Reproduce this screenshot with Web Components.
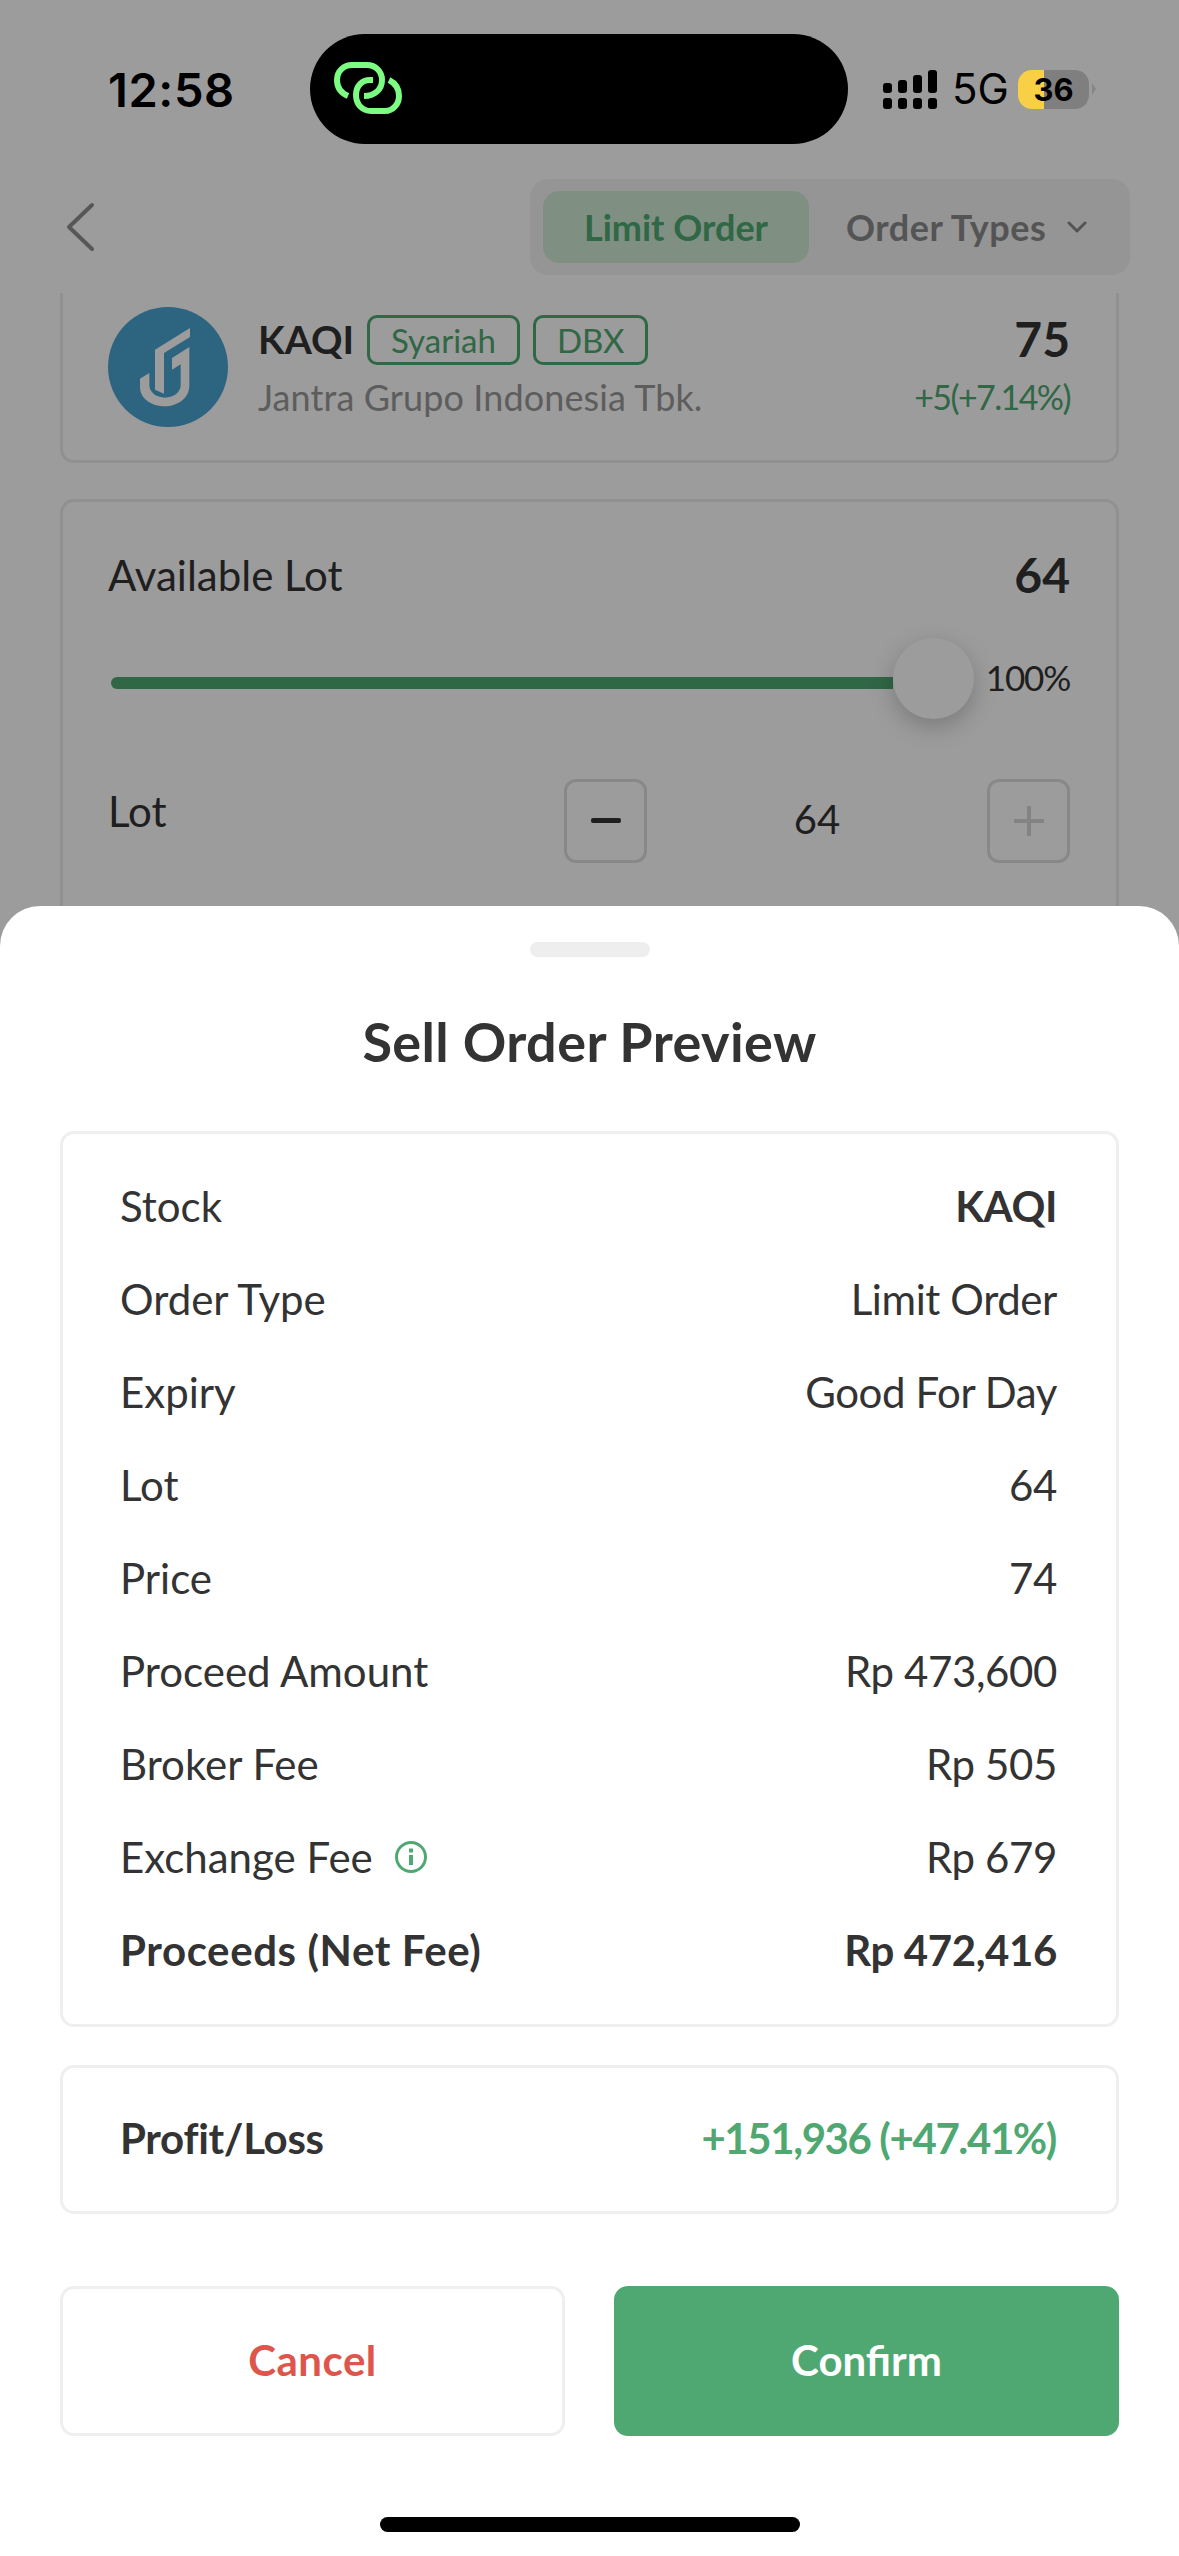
<!DOCTYPE html>
<html>
<head>
<meta charset="utf-8">
<title>Sell Order Preview</title>
<style>
    html, body {
        margin: 0;
        background: #fff;
    }
    body {
        font-family: Lato, "Noto Sans", sans-serif;
        color: #333;
    }
</style>
</head>
<body>
<app-shell>
    <status-bar time="12:58" network="5G" battery="36"></status-bar>
    <nav-bar active="Limit Order" other="Order Types"></nav-bar>
    <stock-card code="KAQI" name="Jantra Grupo Indonesia Tbk." price="75" change="+5(+7.14%)">
        <stock-tag>Syariah</stock-tag>
        <stock-tag>DBX</stock-tag>
    </stock-card>
    <lot-card available="64" percent="100%" lot="64"></lot-card>
    <order-sheet slot="sheet" heading="Sell Order Preview">
        <preview-card>
            <info-row label="Stock" value="KAQI" strong-value></info-row>
            <info-row label="Order Type" value="Limit Order"></info-row>
            <info-row label="Expiry" value="Good For Day"></info-row>
            <info-row label="Lot" value="64"></info-row>
            <info-row label="Price" value="74"></info-row>
            <info-row label="Proceed Amount" value="Rp 473,600"></info-row>
            <info-row label="Broker Fee" value="Rp 505"></info-row>
            <info-row label="Exchange Fee" value="Rp 679" info></info-row>
            <info-row label="Proceeds (Net Fee)" value="Rp 472,416" strong-label strong-value></info-row>
        </preview-card>
        <profit-card label="Profit/Loss" value="+151,936 (+47.41%)"></profit-card>
        <action-button slot="actions" kind="cancel">Cancel</action-button>
        <action-button slot="actions" kind="confirm">Confirm</action-button>
    </order-sheet>
</app-shell>

<script>
class AppShell extends HTMLElement {
    constructor() {
        super()
        this.attachShadow({ mode: 'open' })
        this.shadowRoot.innerHTML = `
            <style>
                :host {
                    display: block;
                    position: relative;
                    width: 1179px;
                    height: 2556px;
                    overflow: hidden;
                    background: #fff;
                }
                #dim {
                    position: absolute;
                    inset: 0;
                    background: rgba(0, 0, 0, 0.39);
                    z-index: 1;
                }
            </style>
            <slot></slot>
            <div id="dim"></div>
            <slot name="sheet"></slot>
        `
    }
}

class StatusBar extends HTMLElement {
    constructor() {
        super()
        this.attachShadow({ mode: 'open' })
    }

    connectedCallback() {
        this.shadowRoot.innerHTML = `
            <style>
                :host {
                    display: flex;
                    align-items: center;
                    position: relative;
                    z-index: 2;
                    height: 110px;
                    padding: 34px 0 35px 108px;
                    font-family: Inter, sans-serif;
                    color: #000;
                }
                #time {
                    width: 202px;
                    font-size: 47px;
                    font-weight: 600;
                    letter-spacing: 0.6px;
                }
                #island {
                    width: 538px;
                    height: 110px;
                    border-radius: 55px;
                    background: #000;
                    flex: none;
                    position: relative;
                }
                #island svg {
                    position: absolute;
                    left: -10px;
                    top: -4px;
                }
                #signal {
                    margin-left: 35px;
                    flex: none;
                }
                #net {
                    margin-left: 15px;
                    font-size: 42px;
                    font-weight: 400;
                    line-height: 42px;
                    width: 51px;
                }
                #battery {
                    margin-left: 15px;
                    width: 71px;
                    height: 39px;
                    border-radius: 14px;
                    background: linear-gradient(90deg, #f9cf45 26px, #7f7f7f 26px);
                    font-size: 31px;
                    font-weight: 700;
                    line-height: 39px;
                    text-align: center;
                    flex: none;
                }
                #nub {
                    margin-left: 3px;
                    width: 0;
                    height: 0;
                    border-left: 4px solid #868686;
                    border-top: 6px solid transparent;
                    border-bottom: 6px solid transparent;
                }
            </style>
            <span id="time">${this.getAttribute('time')}</span>
            <div id="island">
                <svg width="120" height="120" viewBox="0 0 120 120" fill="none" stroke="#7dfc83" stroke-width="6">
                    <path d="M48 66C41 63 37 57 37 50C37 41 44 35 52 35H67C76 35 82 42 82 50C82 60 74 66 64 66"/>
                    <path d="M73 50H70C62 50 56 56 56 65C56 75 63 81 71 81H85C93 81 99 74 99 66C99 58 95 53 89 50"/>
                </svg>
            </div>
            <svg id="signal" width="54" height="39" viewBox="0 0 54 39" fill="#000">
                <rect x="0" y="13" width="9" height="10" rx="3"/>
                <rect x="15" y="10" width="9" height="13" rx="3"/>
                <rect x="30" y="5" width="9" height="18" rx="3"/>
                <rect x="45" y="0" width="9" height="23" rx="3"/>
                <rect x="0" y="28" width="9" height="11" rx="3"/>
                <rect x="15" y="28" width="9" height="11" rx="3"/>
                <rect x="30" y="28" width="9" height="11" rx="3"/>
                <rect x="45" y="28" width="9" height="11" rx="3"/>
            </svg>
            <span id="net">${this.getAttribute('network')}</span>
            <span id="battery">${this.getAttribute('battery')}</span>
            <span id="nub"></span>
        `
    }
}

class NavBar extends HTMLElement {
    constructor() {
        super()
        this.attachShadow({ mode: 'open' })
    }

    connectedCallback() {
        this.shadowRoot.innerHTML = `
            <style>
                :host {
                    display: flex;
                    align-items: center;
                    justify-content: space-between;
                    height: 96px;
                    padding: 0 49px 18px 66px;
                }
                #tabs {
                    display: flex;
                    align-items: center;
                    width: 600px;
                    height: 96px;
                    box-sizing: border-box;
                    padding: 0 13px;
                    border-radius: 18px;
                    background: #f3f3f3;
                    font-size: 36px;
                    font-weight: 700;
                    line-height: 44px;
                }
                #active {
                    width: 266px;
                    height: 72px;
                    border-radius: 16px;
                    background: #d0ecd6;
                    color: #4fa872;
                    display: flex;
                    align-items: center;
                    justify-content: center;
                }
                #other {
                    margin-left: 37px;
                    color: #8a8a8a;
                    letter-spacing: 0.5px;
                }
                #caret {
                    margin-left: 21px;
                }
            </style>
            <svg width="30" height="50" viewBox="0 0 30 50" fill="none" stroke="#8f8f8f" stroke-width="4" stroke-linecap="round" stroke-linejoin="round">
                <path d="M26 3L3 25L26 47"/>
            </svg>
            <div id="tabs">
                <span id="active">${this.getAttribute('active')}</span>
                <span id="other">${this.getAttribute('other')}</span>
                <svg id="caret" width="20" height="12" viewBox="0 0 20 12" fill="none" stroke="#8a8a8a" stroke-width="3" stroke-linecap="round" stroke-linejoin="round">
                    <path d="M2 2L10 10L18 2"/>
                </svg>
            </div>
        `
    }
}

class StockTag extends HTMLElement {
    constructor() {
        super()
        this.attachShadow({ mode: 'open' })
        this.shadowRoot.innerHTML = `
            <style>
                :host {
                    display: inline-flex;
                    align-items: center;
                    height: 50px;
                    box-sizing: border-box;
                    padding: 0 21px;
                    border: 3px solid #4fa872;
                    border-radius: 10px;
                    color: #4fa872;
                    font-size: 33px;
                }
            </style>
            <slot></slot>
        `
    }
}

class StockCard extends HTMLElement {
    constructor() {
        super()
        this.attachShadow({ mode: 'open' })
    }

    connectedCallback() {
        this.shadowRoot.innerHTML = `
            <style>
                :host {
                    display: flex;
                    margin: 0 60px;
                    height: 170px;
                    box-sizing: border-box;
                    padding: 14px 46px 0 45px;
                    border: 3px solid #ebebeb;
                    border-top: none;
                    border-radius: 0 0 14px 14px;
                }
                #logo {
                    flex: none;
                }
                #info {
                    margin-left: 30px;
                    flex: 1;
                }
                #head {
                    display: flex;
                    align-items: center;
                    gap: 13px;
                    height: 50px;
                    margin-top: 8px;
                }
                #code {
                    font-size: 39px;
                    font-weight: 700;
                    line-height: 46px;
                    margin-top: -2px;
                    color: #333;
                }
                #name {
                    margin-top: 10px;
                    font-size: 36px;
                    letter-spacing: 0.1px;
                    color: #999;
                    line-height: 44px;
                }
                #quote {
                    text-align: right;
                }
                #price {
                    font-size: 48px;
                    font-weight: 700;
                    height: 50px;
                    line-height: 48px;
                    margin-top: 8px;
                    color: #333;
                }
                #change {
                    margin-top: 10px;
                    font-size: 34px;
                    letter-spacing: -1.6px;
                    line-height: 44px;
                    color: #4fa872;
                }
            </style>
            <svg id="logo" width="120" height="120" viewBox="0 0 360 360">
                <circle cx="180" cy="180" r="180" fill="#4aa6d1"/>
                <path fill="#fff" d="M141 128L246 63V90L168 138V260L141 248Z"/>
                <path fill="#fff" d="M244 120V235C244 275 208 298 171 298C131 298 96 275 96 240V215L124 198V235C124 255 144 272 171 272C198 272 218 255 218 235V172L192 188V153Z"/>
            </svg>
            <div id="info">
                <div id="head"><span id="code">${this.getAttribute('code')}</span><slot></slot></div>
                <div id="name">${this.getAttribute('name')}</div>
            </div>
            <div id="quote">
                <div id="price">${this.getAttribute('price')}</div>
                <div id="change">${this.getAttribute('change')}</div>
            </div>
        `
    }
}

class LotCard extends HTMLElement {
    constructor() {
        super()
        this.attachShadow({ mode: 'open' })
    }

    connectedCallback() {
        this.shadowRoot.innerHTML = `
            <style>
                :host {
                    display: block;
                    margin: 36px 60px 0;
                    height: 600px;
                    box-sizing: border-box;
                    padding: 43px 46px 0 45px;
                    border: 3px solid #ebebeb;
                    border-radius: 14px;
                    color: #333;
                    font-size: 42px;
                }
                .row {
                    display: flex;
                    align-items: center;
                    justify-content: space-between;
                }
                #available {
                    height: 60px;
                    line-height: 56px;
                }
                #available b {
                    font-size: 48px;
                }
                #slider {
                    height: 81px;
                    margin-top: 33px;
                }
                #track {
                    margin-left: 3px;
                    flex: 1;
                    height: 12px;
                    margin-top: 8px;
                    border-radius: 6px 0 0 6px;
                    background: #4fa872;
                }
                #knob {
                    width: 81px;
                    height: 81px;
                    flex: none;
                    border-radius: 50%;
                    background: #fff;
                    box-shadow: 0 8px 24px rgba(0, 0, 0, 0.22);
                }
                #percent {
                    margin-left: 12px;
                    font-size: 35px;
                    letter-spacing: -1.2px;
                    line-height: 40px;
                    margin-top: -4px;
                }
                #lot {
                    height: 84px;
                    margin-top: 60px;
                }
                #lot-label {
                    align-self: flex-start;
                    margin-top: 8px;
                    line-height: 48px;
                    flex: 1;
                }
                #stepper {
                    display: flex;
                    align-items: center;
                    width: 506px;
                    justify-content: space-between;
                }
                .step {
                    width: 83px;
                    height: 84px;
                    box-sizing: border-box;
                    border: 3px solid #dedede;
                    border-radius: 12px;
                    display: flex;
                    align-items: center;
                    justify-content: center;
                }
                #value {
                    font-size: 40px;
                    line-height: 44px;
                    margin-top: -4px;
                }
            </style>
            <div class="row" id="available"><span>Available Lot</span><b>${this.getAttribute('available')}</b></div>
            <div class="row" id="slider">
                <div id="track"></div>
                <div id="knob"></div>
                <span id="percent">${this.getAttribute('percent')}</span>
            </div>
            <div class="row" id="lot">
                <span id="lot-label">Lot</span>
                <div id="stepper">
                    <div class="step">
                        <svg width="30" height="6" viewBox="0 0 30 6"><rect width="30" height="5" rx="2" fill="#333"/></svg>
                    </div>
                    <span id="value">${this.getAttribute('lot')}</span>
                    <div class="step">
                        <svg width="30" height="30" viewBox="0 0 30 30" fill="#d6d6d6"><rect y="13" width="30" height="4"/><rect x="13" width="4" height="30"/></svg>
                    </div>
                </div>
            </div>
        `
    }
}

class OrderSheet extends HTMLElement {
    constructor() {
        super()
        this.attachShadow({ mode: 'open' })
    }

    connectedCallback() {
        this.shadowRoot.innerHTML = `
            <style>
                :host {
                    display: block;
                    position: absolute;
                    left: 0;
                    right: 0;
                    bottom: 0;
                    height: 1650px;
                    box-sizing: border-box;
                    padding: 36px 60px 0;
                    border-radius: 40px 40px 0 0;
                    background: #fff;
                    z-index: 3;
                }
                #handle {
                    width: 120px;
                    height: 15px;
                    margin: 0 auto;
                    border-radius: 8px;
                    background: #eee;
                }
                h1 {
                    margin: 55px 0 59px;
                    font-size: 54px;
                    letter-spacing: 0.4px;
                    line-height: 60px;
                    font-weight: 700;
                    text-align: center;
                    color: #333;
                }
                #actions {
                    display: flex;
                    gap: 49px;
                    margin-top: 72px;
                }
                #home {
                    width: 420px;
                    height: 15px;
                    margin: 81px auto 0;
                    border-radius: 8px;
                    background: #000;
                }
            </style>
            <div id="handle"></div>
            <h1>${this.getAttribute('heading')}</h1>
            <slot></slot>
            <div id="actions"><slot name="actions"></slot></div>
            <div id="home"></div>
        `
    }
}

class PreviewCard extends HTMLElement {
    constructor() {
        super()
        this.attachShadow({ mode: 'open' })
        this.shadowRoot.innerHTML = `
            <style>
                :host {
                    display: block;
                    box-sizing: border-box;
                    height: 896px;
                    padding: 26.5px 59px 26.5px 57px;
                    border: 3px solid #efefef;
                    border-radius: 14px;
                }
            </style>
            <slot></slot>
        `
    }
}

class InfoRow extends HTMLElement {
    constructor() {
        super()
        this.attachShadow({ mode: 'open' })
    }

    connectedCallback() {
        const icon = this.hasAttribute('info') ? `
            <svg width="32" height="32" viewBox="0 0 32 32" fill="none" stroke="#4fa872" stroke-width="3">
                <circle cx="16" cy="16" r="14.5"/>
                <path d="M16 14V24" stroke-width="4"/>
                <path d="M16 7.5V11.5" stroke-width="4"/>
            </svg>` : ''
        this.shadowRoot.innerHTML = `
            <style>
                :host {
                    display: flex;
                    align-items: center;
                    justify-content: space-between;
                    height: 93px;
                    font-size: 42px;
                    line-height: 48px;
                    color: #333;
                }
                #label {
                    display: flex;
                    align-items: center;
                    gap: 22px;
                }
                span {
                    margin-top: -2px;
                }
                #value {
                    letter-spacing: -0.4px;
                }
                .strong {
                    font-weight: 700;
                }
                #label.strong {
                    letter-spacing: 0.6px;
                }
            </style>
            <span id="label" class="${this.hasAttribute('strong-label') ? 'strong' : ''}">${this.getAttribute('label')}${icon}</span>
            <span id="value" class="${this.hasAttribute('strong-value') ? 'strong' : ''}">${this.getAttribute('value')}</span>
        `
    }
}

class ProfitCard extends HTMLElement {
    constructor() {
        super()
        this.attachShadow({ mode: 'open' })
    }

    connectedCallback() {
        this.shadowRoot.innerHTML = `
            <style>
                :host {
                    display: flex;
                    align-items: center;
                    justify-content: space-between;
                    box-sizing: border-box;
                    height: 149px;
                    margin-top: 38px;
                    padding: 0 60px 0 57px;
                    border: 3px solid #efefef;
                    border-radius: 14px;
                    font-size: 42px;
                    line-height: 48px;
                    font-weight: 700;
                    color: #333;
                }
                span {
                    margin-top: -3px;
                }
                #label {
                    letter-spacing: -0.3px;
                }
                #value {
                    color: #4fa872;
                    letter-spacing: -1.4px;
                }
            </style>
            <span id="label">${this.getAttribute('label')}</span>
            <span id="value">${this.getAttribute('value')}</span>
        `
    }
}

class ActionButton extends HTMLElement {
    constructor() {
        super()
        this.attachShadow({ mode: 'open' })
        this.shadowRoot.innerHTML = `
            <style>
                :host {
                    display: flex;
                    align-items: center;
                    justify-content: center;
                    flex: 1;
                    height: 150px;
                    box-sizing: border-box;
                    border: 3px solid #efefef;
                    border-radius: 14px;
                    font-size: 42px;
                    font-weight: 700;
                    line-height: 46px;
                    padding-bottom: 3px;
                }
                :host([kind="cancel"]) {
                    color: #de564b;
                    letter-spacing: 0.5px;
                }
                :host([kind="confirm"]) {
                    border-color: #4fa872;
                    background: #4fa872;
                    color: #fff;
                }
            </style>
            <slot></slot>
        `
    }
}

customElements.define('app-shell', AppShell)
customElements.define('status-bar', StatusBar)
customElements.define('nav-bar', NavBar)
customElements.define('stock-tag', StockTag)
customElements.define('stock-card', StockCard)
customElements.define('lot-card', LotCard)
customElements.define('order-sheet', OrderSheet)
customElements.define('preview-card', PreviewCard)
customElements.define('info-row', InfoRow)
customElements.define('profit-card', ProfitCard)
customElements.define('action-button', ActionButton)
</script>
</body>
</html>
